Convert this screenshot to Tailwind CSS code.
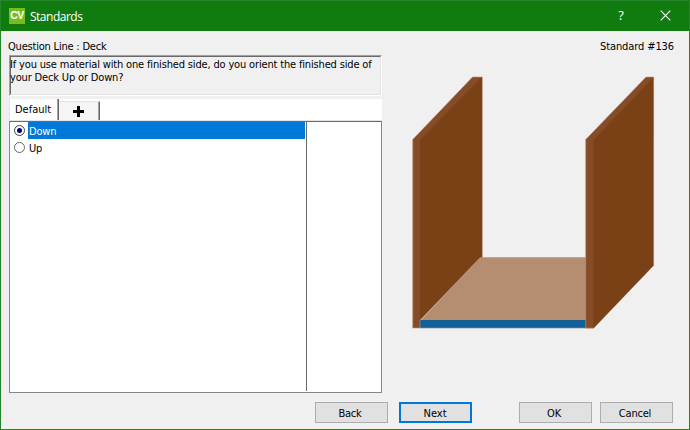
<!DOCTYPE html>
<html lang="en">
<head>
<meta charset="utf-8">
<title>Standards</title>
<script src="https://cdn.jsdelivr.net/npm/@tailwindcss/browser@4"></script>
</head>
<body class="overflow-hidden">
<div class="flex h-[430px] w-[690px] flex-col border border-[#25852a] bg-[#f0f0f0] font-['DejaVu_Sans_Condensed','DejaVu_Sans',sans-serif] text-[11px] leading-[13px] tracking-[-0.2px] text-black">
  <header class="flex h-[30px] shrink-0 items-center bg-[#107c10] pl-2 pb-px font-['Open_Sans',sans-serif] text-white">
    <span class="flex size-4 items-center justify-center bg-[#76bc21] font-['Liberation_Sans',sans-serif] text-[10.5px] font-bold tracking-[-0.5px]">CV</span>
    <span class="ml-[5px] pt-px text-[12px] tracking-[-0.5px]">Standards</span>
    <span class="ml-auto w-[10px] text-center text-[13px]">?</span>
    <svg class="ml-[34px] mr-[18px] size-[11px]" viewBox="0 0 11 11" fill="none" stroke="white" stroke-width="1.1"><path d="M.7.7l9.6 9.6M10.3.7L.7 10.3"/></svg>
  </header>
  <main class="flex h-[362px] shrink-0">
    <section class="ml-2 w-[373px] shrink-0">
      <div class="-ml-px h-6 pt-[9px] whitespace-nowrap">Question Line : Deck</div>
      <div class="h-[41px] border border-t-[#a0a0a0] border-l-[#a0a0a0] border-r-white border-b-white">
        <div class="h-full border border-t-[#696969] border-l-[#696969] border-r-[#e3e3e3] border-b-[#e3e3e3] pt-px whitespace-nowrap"><div class="-ml-px tracking-[-0.16px]">If you use material with one finished side, do you orient the finished side of<br>your Deck Up or Down?</div></div>
      </div>
      <div class="mt-[3px] flex h-[22px] items-end border-b border-[#e3e3e3] bg-white">
        <div class="h-[21px] w-[50px] border-l border-r border-l-[#e3e3e3] border-r-[#696969] shadow-[inset_-1px_0_#a0a0a0] pt-[4px] pl-[5px] tracking-normal">Default</div>
        <div class="flex h-[19px] w-[41px] items-center justify-center border-t border-r border-t-[#e3e3e3] border-r-[#696969] bg-[#f5f5f5] shadow-[inset_-1px_0_#a0a0a0]">
          <svg class="-ml-[2px] size-[11px]" viewBox="0 0 11 11" fill="black"><path d="M4 0h3v4h4v3H7v4H4V7H0V4h4z"/></svg>
        </div>
      </div>
      <div class="flex h-[272px] border border-[#828790] border-t-[#696969] bg-white">
        <div class="w-[296px]">
          <div class="flex h-[17px] items-center pl-1">
            <span class="flex size-[11px] items-center justify-center rounded-full border border-[#444]"><i class="size-[5px] rounded-full bg-[#000080]"></i></span>
            <span class="mr-px ml-[3px] h-[17px] flex-1 bg-[#0078d7] pt-[3px] pl-px text-white">Down</span>
          </div>
          <div class="flex h-[17px] items-center pl-1"><span class="size-[11px] rounded-full border border-[#666]"></span><span class="ml-1 pt-[2px]">Up</span></div>
        </div>
        <div class="h-[269px] w-px bg-[#696969]"></div>
      </div>
    </section>
    <aside class="ml-[19px] w-[289px]">
      <div class="h-6 w-[273px] pt-[9px] text-right tracking-[-0.1px]">Standard #136</div>
      <svg class="mt-[10px] block h-[270px] w-[289px]" viewBox="401 65 289 270">
        <path fill="#b58e72" d="M420 321L480 257.300H586V321z"/>
        <path fill="#155f97" d="M420 320H586V328H420z"/>
        <path fill="none" stroke="#92b5ce" stroke-width=".7" d="M420 328.200H586"/>
        <path fill="#864c27" stroke="#bd9981" stroke-width=".6" d="M412.700 139.500L472.500 77H482.300V257.500H480L420 320V328H412.700z"/>
        <path fill="#7a4117" d="M420 140L482 77V257.200H480L420 320z"/>
        <path fill="#864c27" stroke="#bd9981" stroke-width=".6" d="M585.700 139.500L646 77H653.600V265.500L593.600 328.200H585.700z"/>
        <path fill="#7a4117" d="M593.500 140L653.300 77.500V265.400L593.500 328z"/>
      </svg>
    </aside>
  </main>
  <footer class="flex pt-[9px] pl-[314px] text-center">
    <button class="h-[21px] w-[73px] border border-[#adadad] bg-[#e1e1e1] pt-px pr-[3px]">Back</button>
    <button class="ml-[11px] h-[21px] w-[73px] border-2 border-[#0078d7] bg-[#e1e1e1] pt-px pr-px tracking-normal">Next</button>
    <button class="ml-[47px] h-[21px] w-[73px] border border-[#adadad] bg-[#e1e1e1] pt-px pr-[3px]">OK</button>
    <button class="ml-2 h-[21px] w-[73px] border border-[#adadad] bg-[#e1e1e1] pt-px pr-[3px]">Cancel</button>
  </footer>
</div>
</body>
</html>
